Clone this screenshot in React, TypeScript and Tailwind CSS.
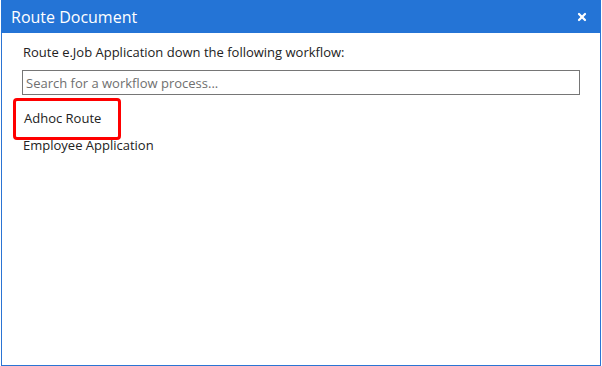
import { X } from "lucide-react";

export default function App() {
  return (
    <div className="w-[602px] h-[366px] bg-white pl-px font-['Open_Sans',sans-serif]">
      <div className="w-[600px] h-[366px] flex flex-col border border-t-0 border-[#2b74d3] bg-white">
        {/* Header */}
        <div className="h-[33px] shrink-0 bg-[#2474d6] flex items-center justify-between pl-[10px] pr-[13px] -mx-px">
          <span className="text-white text-[16px] leading-none">Route Document</span>
          <X className="w-[12px] h-[12px] text-white" strokeWidth={4.5} />
        </div>

        {/* Body */}
        <div className="px-[21px] pt-[10px] text-[13px] text-[#222]">
          <p className="leading-[18px]">Route e.Job Application down the following workflow:</p>
          <input
            className="mt-[9px] -ml-px w-[558px] h-[25px] border border-[#767676] px-[3px] text-[13px] placeholder:text-[#6f6f6f] outline-none"
            placeholder="Search for a workflow process..."
          />
          <ul className="mt-[3px]">
            <li className="-ml-[10px] w-[108px] h-[42px] flex items-center pl-[8px] border-[3px] border-[#f00] rounded-[4px]">
              Adhoc Route
            </li>
            <li className="leading-[18px] mt-[-4px]">Employee Application</li>
          </ul>
        </div>
      </div>
    </div>
  );
}
